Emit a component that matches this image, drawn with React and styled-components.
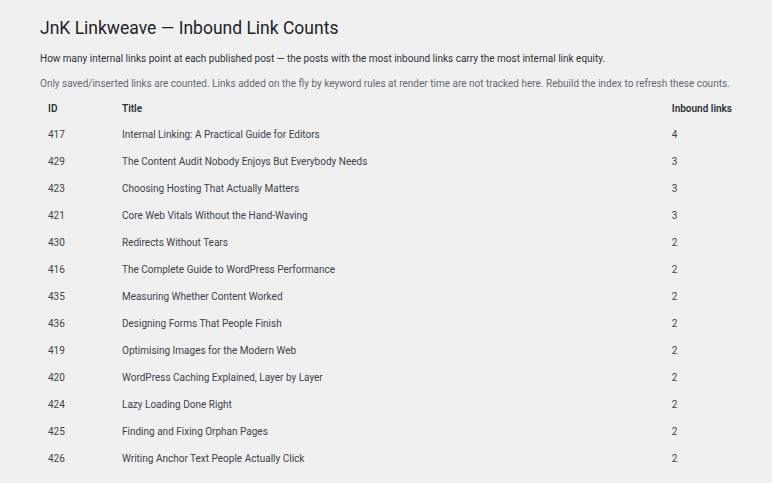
import React from 'react';
import styled, { createGlobalStyle } from 'styled-components';

const rows = [
    { id: 417, title: 'Internal Linking: A Practical Guide for Editors', count: 4 },
    { id: 429, title: 'The Content Audit Nobody Enjoys But Everybody Needs', count: 3 },
    { id: 423, title: 'Choosing Hosting That Actually Matters', count: 3 },
    { id: 421, title: 'Core Web Vitals Without the Hand-Waving', count: 3 },
    { id: 430, title: 'Redirects Without Tears', count: 2 },
    { id: 416, title: 'The Complete Guide to WordPress Performance', count: 2 },
    { id: 435, title: 'Measuring Whether Content Worked', count: 2 },
    { id: 436, title: 'Designing Forms That People Finish', count: 2 },
    { id: 419, title: 'Optimising Images for the Modern Web', count: 2 },
    { id: 420, title: 'WordPress Caching Explained, Layer by Layer', count: 2 },
    { id: 424, title: 'Lazy Loading Done Right', count: 2 },
    { id: 425, title: 'Finding and Fixing Orphan Pages', count: 2 },
    { id: 426, title: 'Writing Anchor Text People Actually Click', count: 2 },
];

function App() {
    return (
        <>
            <GlobalStyle />
            <Wrap>
                <Heading>JnK Linkweave — Inbound Link Counts</Heading>
                <Intro>
                    How many internal links point at each published post — the posts with the most inbound links carry the most internal link equity.
                </Intro>
                <Note>
                    Only saved/inserted links are counted. Links added on the fly by keyword rules at render time are not tracked here. Rebuild the index to refresh these counts.
                </Note>
                <Table>
                    <thead>
                        <tr>
                            <Th>ID</Th>
                            <Th>Title</Th>
                            <Th>Inbound links</Th>
                        </tr>
                    </thead>
                    <tbody>
                        {rows.map(row => (
                            <tr key={row.id}>
                                <Td>{row.id}</Td>
                                <Td>{row.title}</Td>
                                <Td>{row.count}</Td>
                            </tr>
                        ))}
                    </tbody>
                </Table>
            </Wrap>
        </>
    );
}

const GlobalStyle = createGlobalStyle`
  body {
    margin: 0;
    background: #f0f0f1;
    font-family: Roboto, 'Liberation Sans', sans-serif;
  }
`;

const Wrap = styled.div`
  padding: 16px 32px 0 40px;
`;

const Heading = styled.h1`
  margin: 0;
  font-size: 17.5px;
  font-weight: 400;
  line-height: 24px;
  color: #1d2327;
`;

const Intro = styled.p`
  margin: 12px 0 0;
  font-size: 10px;
  line-height: 14px;
  color: #2c3338;
`;

const Note = styled(Intro)`
  margin-top: 11px;
  color: #646970;
`;

const Table = styled.table`
  margin-top: 5px;
  width: 700px;
  border-collapse: collapse;
  font-size: 10px;

  th:first-child, td:first-child { width: 58px; }
  th:last-child, td:last-child { width: 60px; }
`;

const Th = styled.th`
  text-align: left;
  font-weight: 600;
  color: #2c3338;
  padding: 6px 8px;
  line-height: 14px;
  white-space: nowrap;
`;

const Td = styled.td`
  color: #3c434a;
  padding: 6px 8px 7px;
  line-height: 14px;
`;

export default App;
